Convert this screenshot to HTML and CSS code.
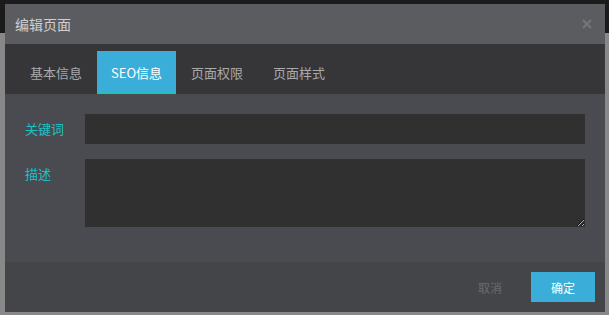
FILE: index.html
```html
<!DOCTYPE html>
<html lang="zh-CN">
  <head>
    <meta charset="UTF-8" />
    <meta name="viewport" content="width=device-width, initial-scale=1.0" />
    <title>编辑页面</title>
    <link rel="stylesheet" href="styles.css">
  </head>
  <body>
    <!-- page behind the modal -->
    <div class="topbar"></div>
    <div class="page"></div>

    <!-- Modal -->
    <div class="modal">
      <div class="modal-header">
        <span class="modal-title">编辑页面</span>
        <span class="modal-close">
          <svg width="10" height="10" viewBox="0 0 10 10">
            <path d="M1 1 L9 9 M9 1 L1 9" stroke="#75767a" stroke-width="2" />
          </svg>
        </span>
      </div>

      <ul class="tabs">
        <li class="tab">基本信息</li>
        <li class="tab active">SEO信息</li>
        <li class="tab">页面权限</li>
        <li class="tab">页面样式</li>
      </ul>

      <div class="modal-body">
        <div class="form-row">
          <label for="keywords">关键词</label>
          <input type="text" id="keywords" />
        </div>
        <div class="form-row">
          <label for="desc">描述</label>
          <textarea id="desc"></textarea>
        </div>
      </div>

      <div class="modal-footer">
        <button class="btn-cancel">取消</button>
        <button class="btn-ok">确定</button>
      </div>
    </div>
  </body>
</html>
```

FILE: styles.css
```css
* {
  box-sizing: border-box;
}

body {
  margin: 0;
  height: 315px;
  overflow: hidden;
  background: #888888;
  font-family: "Noto Sans CJK SC", "Noto Sans", sans-serif;
}

.topbar {
  height: 33px;
  background: #1b1b1b;
}

.modal {
  position: absolute;
  left: 5px;
  top: 4px;
  width: 600px;
  background: #4a4b50;
}

.modal-header {
  height: 40px;
  display: flex;
  align-items: center;
  justify-content: space-between;
  padding: 0 13px 0 10px;
  background: #5b5c60;
}

.modal-title {
  font-size: 14px;
  color: #cfcfd0;
}

.modal-close {
  display: flex;
}

.tabs {
  list-style: none;
  margin: 0;
  height: 50px;
  padding: 7px 0 0 10px;
  display: flex;
  background: #363638;
}

.tab {
  height: 43px;
  padding: 0 15px;
  display: flex;
  align-items: center;
  font-size: 13px;
  color: #a9a9ab;
  cursor: pointer;
}

.tab.active {
  background: #3aaed8;
  color: #ffffff;
  border-bottom: 3px solid #22bfc0;
  padding: 3px 14px 0 14px;
}

.modal-body {
  padding: 20px 20px 35px 20px;
  display: flex;
  flex-direction: column;
  gap: 15px;
}

.form-row {
  display: flex;
  align-items: flex-start;
}

.form-row label {
  width: 60px;
  line-height: 30px;
  font-size: 13px;
  color: #1ec0c8;
}

.form-row input,
.form-row textarea {
  flex: 1;
  border: none;
  outline: none;
  margin: 0;
  background: #303030;
  color: #ddd;
  font-family: inherit;
}

.form-row input {
  height: 30px;
}

.form-row textarea {
  height: 68px;
}

.modal-footer {
  height: 50px;
  padding: 10px;
  display: flex;
  justify-content: flex-end;
  align-items: center;
  gap: 29px;
  background: #444549;
}

.modal-footer button {
  border: none;
  font-family: inherit;
  font-size: 12px;
  cursor: pointer;
}

.btn-cancel {
  background: none;
  padding: 0;
  color: #6a6b6e;
}

.btn-ok {
  width: 64px;
  height: 30px;
  background: #3aaed8;
  color: #ffffff;
}
```
